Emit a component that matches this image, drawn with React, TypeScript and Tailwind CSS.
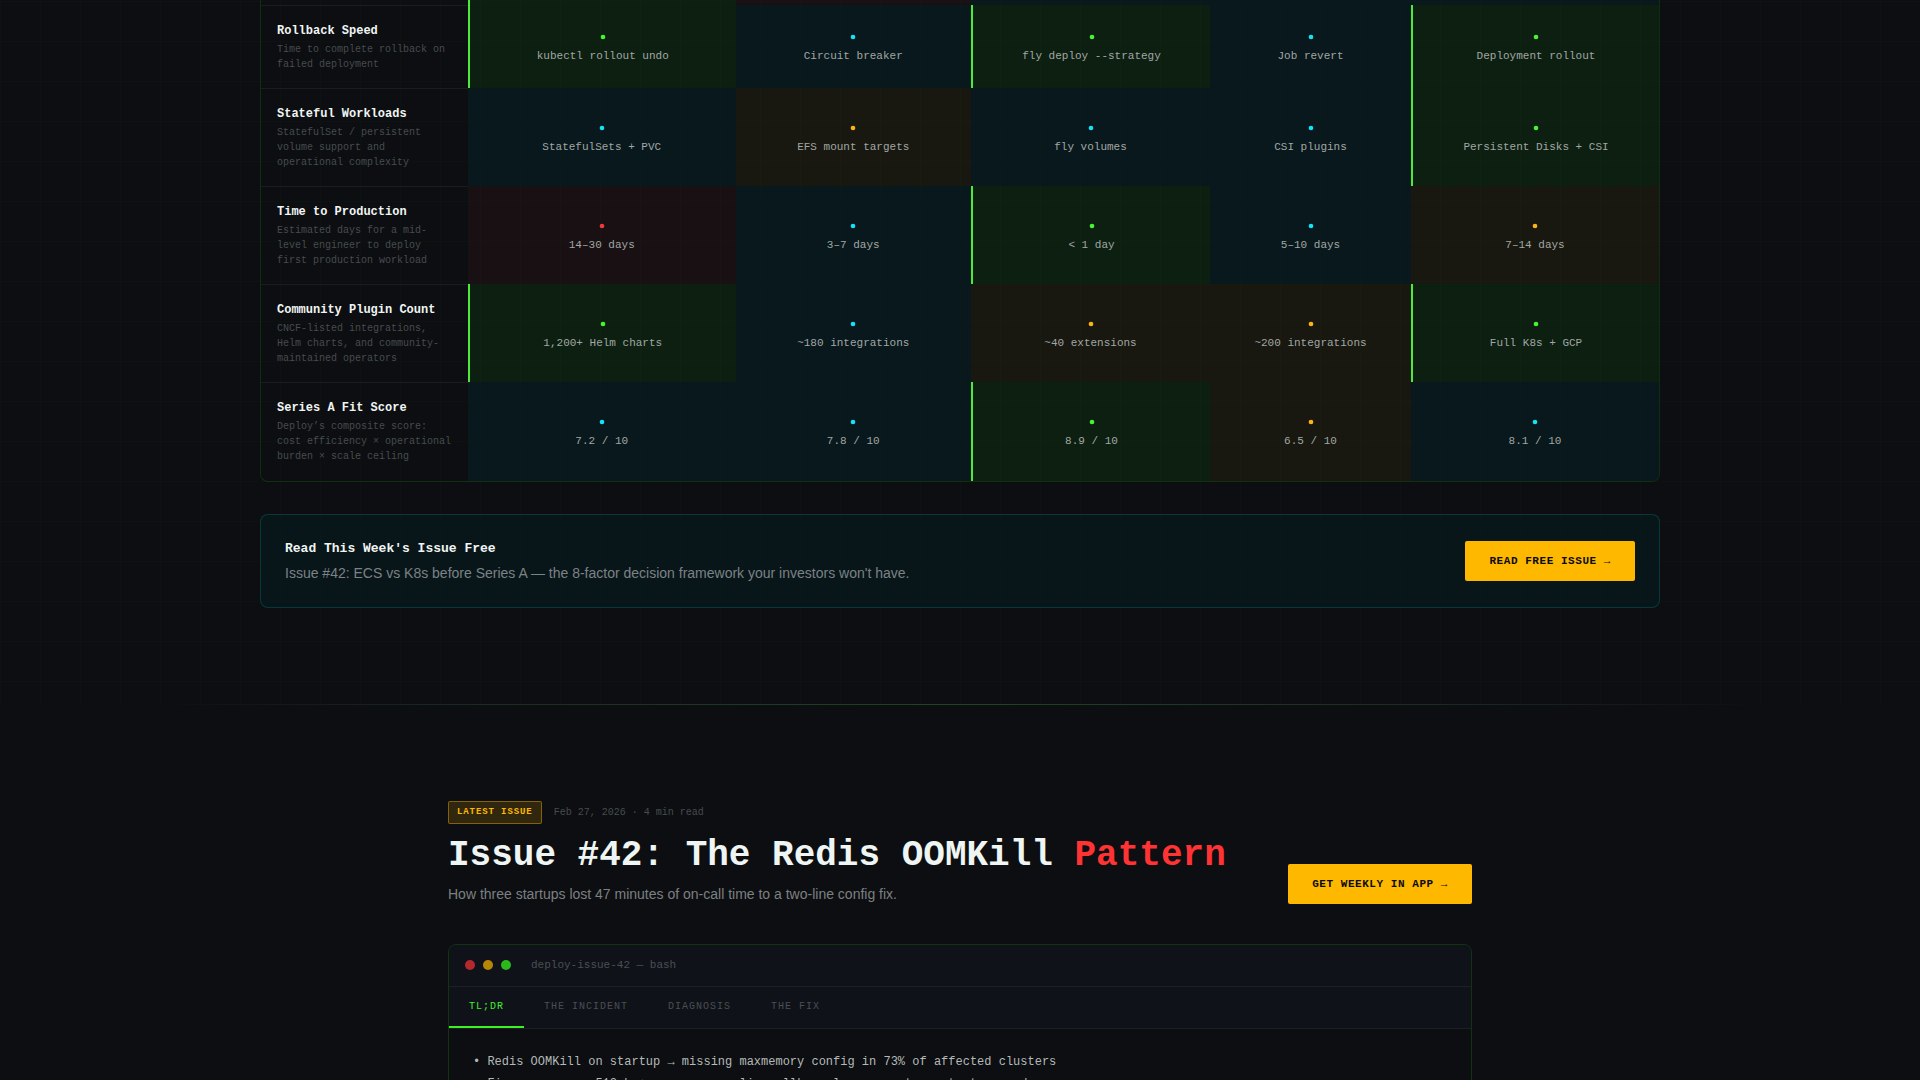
type Tone = "best" | "good" | "fair" | "poor";
type Cell = [Tone, string];

const cellTone: Record<Tone, string> = {
  best: "bg-[#20ff20]/[0.072] border-l-2 border-[#4eea3b]",
  good: "bg-[#081c21]/70",
  fair: "bg-[#f0b800]/[0.053]",
  poor: "bg-[#ff3333]/[0.05]",
};

const dotTone: Record<Tone, string> = {
  best: "fill-[#47f42f]",
  good: "fill-[#12e3f5]",
  fair: "fill-[#fbb318]",
  poor: "fill-[#f03a3a]",
};

const columns = "grid grid-cols-[207px_267.5px_235.5px_239px_201px_248px]";

const rows: { name: string; lines: string[]; cells: Cell[] }[] = [
  {
    name: "Rollback Speed",
    lines: ["Time to complete rollback on", "failed deployment"],
    cells: [
      ["best", "kubectl rollout undo"],
      ["good", "Circuit breaker"],
      ["best", "fly deploy --strategy"],
      ["good", "Job revert"],
      ["best", "Deployment rollout"],
    ],
  },
  {
    name: "Stateful Workloads",
    lines: ["StatefulSet / persistent", "volume support and", "operational complexity"],
    cells: [
      ["good", "StatefulSets + PVC"],
      ["fair", "EFS mount targets"],
      ["good", "fly volumes"],
      ["good", "CSI plugins"],
      ["best", "Persistent Disks + CSI"],
    ],
  },
  {
    name: "Time to Production",
    lines: ["Estimated days for a mid-", "level engineer to deploy", "first production workload"],
    cells: [
      ["poor", "14–30 days"],
      ["good", "3–7 days"],
      ["best", "< 1 day"],
      ["good", "5–10 days"],
      ["fair", "7–14 days"],
    ],
  },
  {
    name: "Community Plugin Count",
    lines: ["CNCF-listed integrations,", "Helm charts, and community-", "maintained operators"],
    cells: [
      ["best", "1,200+ Helm charts"],
      ["good", "~180 integrations"],
      ["fair", "~40 extensions"],
      ["fair", "~200 integrations"],
      ["best", "Full K8s + GCP"],
    ],
  },
  {
    name: "Series A Fit Score",
    lines: ["Deploy’s composite score:", "cost efficiency × operational", "burden × scale ceiling"],
    cells: [
      ["good", "7.2 / 10"],
      ["good", "7.8 / 10"],
      ["best", "8.9 / 10"],
      ["fair", "6.5 / 10"],
      ["good", "8.1 / 10"],
    ],
  },
];

const previousRow: Tone[] = ["best", "poor", "good", "good", "good"];

function Dot({ tone }: { tone: Tone }) {
  return (
    <svg viewBox="0 0 4 4" className={`size-1 overflow-visible ${dotTone[tone]}`}>
      <circle cx="2" cy="2" r="2.35" />
    </svg>
  );
}

function ComparisonTable() {
  return (
    <div className="h-[482px] overflow-hidden rounded-b-lg border border-t-0 border-[#39ff14]/[0.13]">
      <div className={`${columns} h-[6px]`}>
        <div className="border-b border-white/[0.06]" />
        {previousRow.map((tone, i) => (
          <div key={i} className={`mb-px ${cellTone[tone]}`} />
        ))}
      </div>
      {rows.map((row, r) => (
        <div key={row.name} className={`${columns} ${r === 0 ? "h-[83px]" : "h-[98px]"}`}>
          <div
            className={`pt-4 pl-4 whitespace-nowrap ${r < rows.length - 1 ? "border-b border-white/[0.06]" : ""}`}
          >
            <div className="text-[12px] leading-[18px] font-bold text-[#f0f5f3]">{row.name}</div>
            <div className="mt-[2px] text-[10px] leading-[15px] text-[#474c4e]">
              {row.lines.map((line) => (
                <div key={line}>{line}</div>
              ))}
            </div>
          </div>
          {row.cells.map(([tone, text], c) => (
            <div
              key={c}
              className={`-mt-px flex flex-col items-center justify-center pt-[7px] ${r < rows.length - 1 ? "mb-px" : "pb-px"} ${cellTone[tone]}`}
            >
              <Dot tone={tone} />
              <span className="mt-[9px] text-[11px] leading-[17px] whitespace-nowrap text-[#a1a7a4]">{text}</span>
            </div>
          ))}
        </div>
      ))}
    </div>
  );
}

function Button({ children }: { children: string }) {
  return (
    <button className="h-10 rounded-[2px] bg-[#ffb800] px-6 text-[11px] leading-4 font-bold tracking-[0.55px] whitespace-nowrap text-[#0a0c10]">
      {children}
    </button>
  );
}

function Tab({ label, active = false }: { label: string; active?: boolean }) {
  return (
    <div
      className={
        active
          ? "h-[41px] border-b-2 border-[#3df023] px-5 pt-3 text-[10px] leading-4 tracking-[1px] text-[#3ff02b]"
          : "h-[41px] px-5 pt-3 text-[10px] leading-4 tracking-[1px] text-[#4a4f52]"
      }
    >
      {label}
    </div>
  );
}

export default function App() {
  return (
    <div className="h-[1080px] w-full overflow-hidden bg-[#0c0e11] font-['Liberation_Mono',monospace]">
      <section className="h-[704px] bg-[linear-gradient(rgba(57,255,20,0.016)_1px,transparent_1px),linear-gradient(90deg,rgba(57,255,20,0.016)_1px,transparent_1px)] bg-[size:40px_40px] bg-[position:0_1px]">
        <div className="mx-auto w-[1400px]">
          <ComparisonTable />
          <div className="mt-8 flex h-[94px] items-center justify-between rounded-lg border border-[#00e5d8]/[0.17] bg-[#07191e]/70 px-6">
            <div>
              <div className="text-[13px] leading-5 font-bold text-[#f0f5f3]">Read This Week's Issue Free</div>
              <div className="mt-1 font-['Liberation_Sans',sans-serif] text-[14px] leading-[21px] text-[#7c8285]">
                Issue #42: ECS vs K8s before Series A — the 8-factor decision framework your investors won't have.
              </div>
            </div>
            <Button>READ FREE ISSUE →</Button>
          </div>
        </div>
      </section>

      <div className="mx-auto h-px w-[84%] bg-[linear-gradient(90deg,transparent,rgba(120,200,130,0.15)_20%,rgba(80,230,80,0.26)_50%,rgba(120,200,130,0.15)_80%,transparent)]" />

      <section className="mx-auto w-[1024px] pt-24">
        <div className="flex h-[103px] items-end justify-between">
          <div className="h-full">
            <div className="flex h-[23px] gap-3">
              <span className="h-[23px] rounded-[2px] border border-[#ffb800]/40 bg-[#ffb800]/15 px-2 pt-[3px] text-[9px] leading-[14px] font-bold tracking-[0.9px] text-[#ffb800]">
                LATEST ISSUE
              </span>
              <span className="pt-1 text-[10px] leading-[15px] text-[#474c4e]">Feb 27, 2026 · 4 min read</span>
            </div>
            <h2 className="mt-3 text-[36px] leading-10 font-bold whitespace-nowrap text-[#eef5f3]">
              Issue #42: The Redis OOMKill <span className="text-[#ff3333]">Pattern</span>
            </h2>
            <p className="mt-[7px] font-['Liberation_Sans',sans-serif] text-[14px] leading-[22px] text-[#7c8081]">
              How three startups lost 47 minutes of on-call time to a two-line config fix.
            </p>
          </div>
          <Button>GET WEEKLY IN APP →</Button>
        </div>

        <div className="mt-10 h-[300px] overflow-hidden rounded-lg border border-[#39ff14]/[0.15]">
          <div className="flex h-[42px] items-center gap-2 border-b border-white/[0.06] bg-[#0f1219] px-4 pb-px">
            <span className="size-[10px] rounded-full bg-[#b3292d]" />
            <span className="size-[10px] rounded-full bg-[#b78608]" />
            <span className="size-[10px] rounded-full bg-[#2cb81b]" />
            <span className="ml-3 text-[11px] leading-4 text-[#4a4f52]">deploy-issue-42 — bash</span>
          </div>
          <div className="flex h-[42px] border-b border-white/[0.06] bg-[#0f1219]">
            <Tab label="TL;DR" active />
            <Tab label="THE INCIDENT" />
            <Tab label="DIAGNOSIS" />
            <Tab label="THE FIX" />
          </div>
          <div className="px-6 pt-[23px] text-[12px] leading-[21.6px] text-[#b5bab8]">
            <div>• Redis OOMKill on startup → missing maxmemory config in 73% of affected clusters</div>
            <div>• Fix: maxmemory 512mb + maxmemory-policy allkeys-lru prevents restart cascade</div>
          </div>
        </div>
      </section>
    </div>
  );
}
